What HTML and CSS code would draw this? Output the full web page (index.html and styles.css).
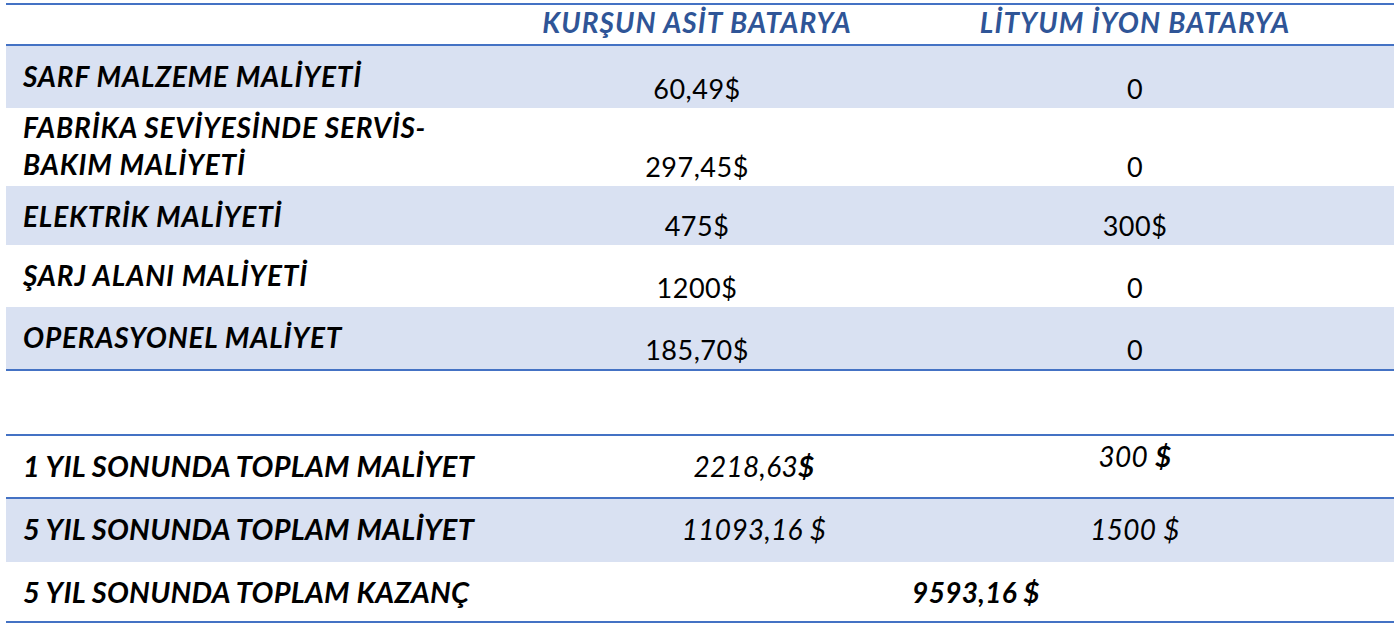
FILE: index.html
```html
<!DOCTYPE html>
<html lang="tr">
<head>
<meta charset="utf-8">
<title>Batarya Maliyet Karşılaştırması</title>
<link rel="stylesheet" href="styles.css">
</head>
<body>
<div class="page">
  <section class="table top-table">
    <div class="row head-row">
      <div class="cell"></div>
      <div class="cell head">KURŞUN ASİT BATARYA</div>
      <div class="cell head">LİTYUM İYON BATARYA</div>
      <div class="cell"></div>
    </div>
    <div class="row r1 shaded">
      <div class="cell label">SARF MALZEME MALİYETİ</div>
      <div class="cell value">60,49$</div>
      <div class="cell value">0</div>
      <div class="cell"></div>
    </div>
    <div class="row r2">
      <div class="cell label label-two">FABRİKA SEVİYESİNDE SERVİS-<br>BAKIM MALİYETİ</div>
      <div class="cell value">297,45$</div>
      <div class="cell value">0</div>
      <div class="cell"></div>
    </div>
    <div class="row r3 shaded">
      <div class="cell label">ELEKTRİK MALİYETİ</div>
      <div class="cell value">475$</div>
      <div class="cell value">300$</div>
      <div class="cell"></div>
    </div>
    <div class="row r4">
      <div class="cell label">ŞARJ ALANI MALİYETİ</div>
      <div class="cell value">1200$</div>
      <div class="cell value">0</div>
      <div class="cell"></div>
    </div>
    <div class="row r5 shaded">
      <div class="cell label">OPERASYONEL MALİYET</div>
      <div class="cell value">185,70$</div>
      <div class="cell value">0</div>
      <div class="cell"></div>
    </div>
  </section>

  <section class="table bottom-table">
    <div class="brow b1 lined">
      <div class="cell blabel">1 YIL SONUNDA TOPLAM MALİYET</div>
      <div class="cell bvalue">2218,63<b>$</b></div>
      <div class="cell bvalue raised">300 <b>$</b></div>
      <div class="cell"></div>
    </div>
    <div class="brow b2 shaded">
      <div class="cell blabel">5 YIL SONUNDA TOPLAM MALİYET</div>
      <div class="cell bvalue">11093,16 $</div>
      <div class="cell bvalue">1500 $</div>
      <div class="cell"></div>
    </div>
    <div class="brow b3">
      <div class="cell blabel">5 YIL SONUNDA TOPLAM KAZANÇ</div>
      <div class="cell bvalue merged strong">9593,16 $</div>
      <div class="cell"></div>
    </div>
  </section>
</div>
</body>
</html>
```

FILE: styles.css
```css
* { box-sizing: border-box; }

html, body {
  margin: 0;
  padding: 0;
  background: #ffffff;
}

body {
  font-family: Lato, "Open Sans", "Liberation Sans", sans-serif;
  color: #000000;
  width: 1400px;
  height: 634px;
  overflow: hidden;
}

.page {
  padding: 3px 6px 0 6px;
}

.table {
  border-top: 2px solid #4472c4;
  border-bottom: 2px solid #4472c4;
}

.top-table .row {
  display: grid;
  grid-template-columns: 472px 438px 438px 1fr;
}

.shaded { background: #d9e1f2; }

.head-row {
  height: 41px;
  border-bottom: 2px solid #4472c4;
}

.head {
  font-weight: 700;
  font-style: italic;
  font-size: 28px;
  line-height: 1.2;
  color: #2f5597;
  text-align: center;
  padding-top: 1px;
  letter-spacing: 1.1px;
  white-space: nowrap;
}

.r1 { height: 62px; }
.r2 { height: 78px; }
.r3 { height: 59px; }
.r4 { height: 62px; }
.r5 { height: 62px; }

.label {
  font-weight: 700;
  font-style: italic;
  font-size: 28px;
  line-height: 1.2;
  padding: 14px 0 0 17px;
  align-self: start;
  letter-spacing: 0.8px;
  white-space: nowrap;
}

.label-two {
  line-height: 37px;
  padding-top: 1px;
}

.value {
  font-size: 27px;
  line-height: 1.2;
  text-align: center;
  align-self: end;
  padding-bottom: 3px;
  letter-spacing: 0.5px;
}

.bottom-table {
  margin-top: 63px;
}

.brow {
  display: grid;
  grid-template-columns: 589px 318px 444px 1fr;
}

.b1 { height: 63px; }
.b2 { height: 63px; }
.b3 { height: 59px; }

.lined { border-bottom: 2px solid #4472c4; }

.blabel {
  font-weight: 700;
  font-style: italic;
  font-size: 29px;
  line-height: 1.2;
  padding: 13px 0 0 17px;
  letter-spacing: 0.25px;
  white-space: nowrap;
}

.bvalue {
  font-style: italic;
  font-size: 28px;
  line-height: 1.2;
  text-align: center;
  padding-top: 14px;
  letter-spacing: 0.3px;
  white-space: nowrap;
}

.bvalue b { font-weight: 700; }

.raised { padding-top: 4px; }

.merged { grid-column: 2 / 4; }

.strong { font-weight: 700; }
```
